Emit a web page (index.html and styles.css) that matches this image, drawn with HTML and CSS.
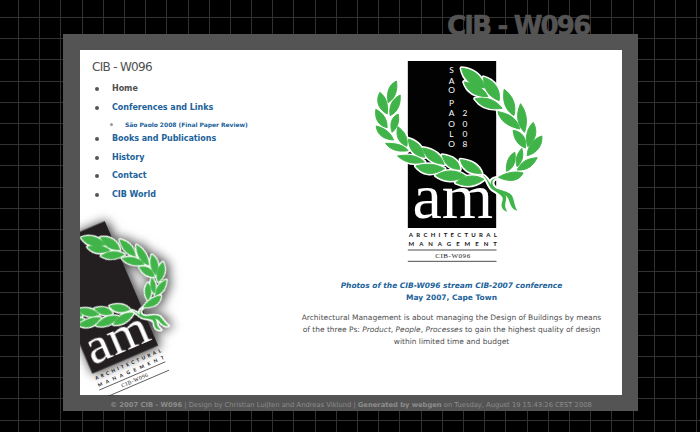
FILE: index.html
```
<!DOCTYPE html>
<html lang="en">
<head>
<meta charset="utf-8">
<title>CIB - W096</title>
<link rel="stylesheet" href="styles.css">
</head>
<body>
<svg class="defs" width="0" height="0" aria-hidden="true">
  <defs>
    <g id="leaves">
      <path d="M138 243C112 255 108 282 113 308C135 295 142 270 138 243Z"/>
      <path d="M88 277C76 300 80 325 110 342C114 315 108 292 88 277Z"/>
      <path d="M149 285C122 298 115 322 119 347C143 335 151 312 149 285Z"/>
      <path d="M76 328C72 358 85 378 110 383C110 355 98 340 76 328Z"/>
      <path d="M143 342C121 352 117 375 125 397C144 380 147 362 143 342Z"/>
      <path d="M77 378C80 405 100 418 129 420C120 395 100 384 77 378Z"/>
      <path d="M142 380C135 405 142 428 169 439C174 415 163 395 142 380Z"/>
      <path d="M105 430C122 452 145 456 173 452C158 432 132 430 105 430Z"/>
      <path d="M174 417C174 447 190 468 222 472C218 442 200 425 174 417Z"/>
      <path d="M141 468C163 488 190 494 222 486C200 464 170 463 141 468Z"/>
      <path d="M216 444C225 475 245 490 281 493C270 460 245 448 216 444Z"/>
      <path d="M196 498C215 522 245 530 282 506C255 490 225 490 196 498Z"/>
      <path d="M275 466C283 495 300 508 328 508C325 480 305 470 275 466Z"/>
      <path d="M256 526C280 545 315 547 345 528C318 508 285 508 256 526Z"/>
      <path d="M330 479C335 505 355 522 393 520C385 495 360 482 330 479Z"/>
      <path d="M316 548C345 562 375 558 400 538C375 522 340 525 316 548Z"/>
      <path d="M333 205C340 240 365 260 403 264C395 225 365 207 333 205Z"/>
      <path d="M341 246C350 275 375 290 412 290C400 262 370 250 341 246Z"/>
      <path d="M399 232C400 270 415 290 446 302C452 268 430 240 399 232Z"/>
      <path d="M374 296C392 322 420 330 455 325C435 298 405 290 374 296Z"/>
      <path d="M461 268C455 305 465 330 490 347C500 315 485 285 461 268Z"/>
      <path d="M442 335C450 365 475 380 508 387C500 355 475 340 442 335Z"/>
      <path d="M510 311C495 345 500 375 522 397C533 365 528 335 510 311Z"/>
      <path d="M488 391C490 420 505 437 525 444C530 415 515 395 488 391Z"/>
      <path d="M548 367C525 390 525 420 532 440C558 420 562 390 548 367Z"/>
      <path d="M574 408C550 415 530 440 530 467C560 460 577 435 574 408Z"/>
      <path d="M560 473C530 475 512 485 500 510C530 512 548 498 560 473Z"/>
      <path d="M514 445C500 460 492 480 500 500C517 485 520 465 514 445Z"/>
      <path d="M493 457C475 465 465 490 468 514C492 505 497 480 493 457Z"/>
      <path d="M518 519C495 512 465 518 444 532C475 547 505 545 518 519Z"/>
    </g>
    <g id="ribbons">
      <path d="M396 526C412 530 416 556 434 565C455 573 478 574 486 590C492 604 492 620 501 632C486 630 480 616 476 602C470 580 444 580 428 570C411 559 414 538 396 526Z"/>
      <path d="M440 534C424 537 422 552 432 562C444 574 465 576 467 592C468 606 458 616 470 635C453 630 450 616 456 602C461 586 442 582 428 568C414 552 420 535 440 534Z"/>
    </g>
    <g id="emblem">
      <rect class="block" x="172" y="183" width="265" height="501"/>
      <text class="am" x="186" y="655" textLength="242" lengthAdjust="spacingAndGlyphs">am</text>
      <g class="halo"><use href="#leaves"/><use href="#ribbons"/></g>
      <use class="green fat" href="#leaves"/>
      <use class="green" href="#ribbons"/>
    </g>
    <g id="lettering">
      <text class="caps" x="175" y="711" textLength="264">ARCHITECTURAL</text>
      <text class="caps" x="174" y="739" textLength="265">MANAGEMENT</text>
      <path class="rule" d="M172 750H438M172 784H438"/>
      <text class="code" x="254" y="775" textLength="105">CIB-W096</text>
    </g>
  </defs>
</svg>

<div class="page">
  <h1 class="site-title">CIB - W096</h1>
  <div class="frame">
    <div class="content">
      <aside class="sidebar">
        <h2 class="menu-title">CIB - W096</h2>
        <ul class="menu">
          <li class="current"><span>Home</span></li>
          <li><a>Conferences and Links</a></li>
          <li class="sub"><a>São Paolo 2008 (Final Paper Review)</a></li>
          <li><a>Books and Publications</a></li>
          <li><a>History</a></li>
          <li><a>Contact</a></li>
          <li><a>CIB World</a></li>
        </ul>
        <svg class="tilted" viewBox="240 600 360 585">
          <g transform="translate(277 1118) rotate(-23.2) scale(.81) translate(-172 -684)">
            <use class="shadowed" href="#emblem"/>
            <use href="#lettering"/>
          </g>
        </svg>
      </aside>
      <main class="main">
        <svg class="logo" viewBox="28.5 180 552 612">
          <use href="#emblem"/>
          <use href="#lettering"/>
          <g class="vertical">
            <text x="303" y="220">S</text><text x="303" y="251">A</text><text x="303" y="279">O</text>
            <text x="303" y="318">P</text><text x="303" y="349">A</text><text x="303" y="380">O</text><text x="303" y="410">L</text><text x="303" y="442">O</text>
            <text x="343" y="347">2</text><text x="343" y="381">0</text><text x="343" y="411">0</text><text x="343" y="442">8</text>
          </g>
        </svg>
        <p class="photos"><em>Photos of the CIB-W096 stream CIB-2007 conference</em><br><span>May 2007, Cape Town</span></p>
        <p class="about">Architectural Management is about managing the Design of Buildings by means<br>of the three Ps: <em>Product</em>, <em>People</em>, <em>Processes</em> to gain the highest quality of design<br>within limited time and budget</p>
      </main>
    </div>
    <footer class="footer"><b>© 2007 CIB - W096</b> | Design by Christian Luijten and Andreas Viklund | <b>Generated by webgen</b> on Tuesday, August 19 15:43:26 CEST 2008</footer>
  </div>
</div>
</body>
</html>
```
FILE: styles.css
```
* { box-sizing: border-box; margin: 0; padding: 0; }

body {
  height: 432px;
  overflow: hidden;
  background-color: #000;
  background-image:
    repeating-linear-gradient(90deg, #323232 0 1px, transparent 1px 21.19px),
    repeating-linear-gradient(180deg, #323232 0 1px, transparent 1px 21.19px);
  background-position: -3.2px 0, 0 -4.2px;
  background-size: 720px 450px;
  background-repeat: no-repeat;
  font-family: Verdana, "DejaVu Sans", sans-serif;
  color: #505050;
}

.defs { display: block; }

.page { width: 575px; margin-left: 63px; }

.site-title {
  height: 34px;
  padding: 10px 0 0 384px;
  font-size: 26px;
  line-height: 32px;
  letter-spacing: -1.8px;
  white-space: nowrap;
  color: #545454;
  -webkit-text-stroke: .6px #545454;
}

.frame { height: 377px; padding: 16px 16px 0 17px; background: #545454; }

.content { display: flex; height: 345px; background: #fff; }

.sidebar { display: flex; flex-direction: column; width: 201px; }

.menu-title {
  flex: none;
  height: 29.5px;
  padding: 9px 0 0 12px;
  font-size: 12px;
  line-height: 16px;
  font-weight: 400;
  letter-spacing: -.7px;
}

.menu { flex: none; list-style: none; font-size: 8px; font-weight: 700; letter-spacing: -.04px; color: #505050; }

.menu li {
  display: flex;
  align-items: center;
  height: 18.5px;
  padding-left: 15px;
  white-space: nowrap;
}

.menu li::before {
  content: "";
  width: 4px;
  height: 4px;
  margin: 1px 13px 0 0;
  border-radius: 50%;
  background: #555;
}

.menu a, .photos { color: #21629a; }

.menu .sub { height: 13px; padding: 2.5px 0 0 30px; font-size: 6px; }

.menu .sub::before {
  width: 3px;
  height: 3px;
  margin-right: 12px;
  background: #999;
}

.tilted { display: block; flex: none; width: 120px; height: 195px; margin-top: -3px; --block: #231f20; }

.main { width: 341px; padding-top: 10px; text-align: center; font-size: 7.47px; line-height: 12px; }

.logo { display: block; width: 184px; height: 204px; margin: 0 auto; }

.photos { margin-top: 15.5px; font-weight: 700; white-space: nowrap; }

.about { margin-top: 8px; white-space: nowrap; }

.footer {
  padding-top: 4px;
  text-align: center;
  font-size: 6.75px;
  line-height: 12px;
  white-space: nowrap;
  color: #8c8c8c;
}

.block { fill: var(--block, #020202); }
.am { fill: #fff; font: 188px "Liberation Serif", serif; }
.halo { fill: #fff; stroke: #fff; stroke-width: 12; stroke-linejoin: round; }
.green { fill: #41b449; }
.fat { stroke: #41b449; stroke-width: 3; }
.caps { fill: #111; font: 700 18px Lato, sans-serif; }
.code { fill: #222; font: 21px "Liberation Serif", serif; }
.rule { stroke: #222; stroke-width: 2.4; fill: none; }
.vertical { fill: #fff; font: 25px Lato, sans-serif; text-anchor: middle; }
.shadowed { filter: drop-shadow(8px 4px 20px rgba(0, 0, 0, .65)) drop-shadow(0 0 18px rgba(0, 0, 0, .25)); }
```
